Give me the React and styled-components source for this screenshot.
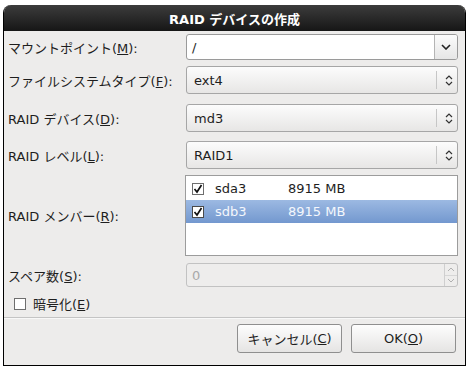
import React from "react";
import styled, { createGlobalStyle } from "styled-components";

const GlobalStyle = createGlobalStyle`
  html, body {
    margin: 0;
    padding: 0;
    background: #ffffff;
  }
  body {
    font-family: "DejaVu Sans", "Noto Sans CJK JP", sans-serif;
    font-size: 13px;
    color: #1e1e1e;
  }
`;

const Window = styled.div`
  margin: 5px 0 0 3px;
  width: 463px;
  height: 361px;
  box-sizing: border-box;
  display: flex;
  flex-direction: column;
  background: #edeceb;
  border: 1px solid #000;
  border-top: none;
  border-radius: 8px 8px 0 0;
  overflow: hidden;
`;

const TitleBar = styled.div`
  height: 26px;
  flex: none;
  display: flex;
  align-items: center;
  justify-content: center;
  background: linear-gradient(#3c3c3c, #161616);
  color: #ffffff;
  font-weight: bold;
  font-size: 13px;
`;

const Form = styled.div`
  display: flex;
  flex-direction: column;
  padding: 0 6px 0 4px;
`;

const Row = styled.div`
  display: flex;
  align-items: center;
  margin-top: ${(p) => p.$top}px;
`;

const Label = styled.div`
  width: 178px;
  flex: none;
  white-space: nowrap;
`;

const Key = styled.span`
  text-decoration: underline;
`;

const Entry = styled.div`
  width: 272px;
  height: 26px;
  box-sizing: border-box;
  display: flex;
  border: 1px solid #9a9a9a;
  border-radius: 3px;
  background: #ffffff;
  overflow: hidden;
`;

const EntryText = styled.div`
  flex: 1;
  display: flex;
  align-items: center;
  padding-left: 5px;
`;

const EntryButton = styled.div`
  width: 22px;
  display: flex;
  align-items: center;
  justify-content: center;
  border-left: 1px solid #b4b4b4;
  background: linear-gradient(#fbfbfb, #e6e6e6);
`;

const Combo = styled.div`
  width: 272px;
  height: 28px;
  box-sizing: border-box;
  display: flex;
  align-items: center;
  border: 1px solid #a6a6a6;
  border-radius: 3px;
  background: linear-gradient(#fcfcfc, #e7e6e5);
`;

const ComboText = styled.div`
  flex: 1;
  padding-left: 7px;
`;

const ComboSep = styled.div`
  width: 1px;
  height: 18px;
  background: #c6c6c6;
  margin-right: 5px;
`;

const ComboArrow = styled.div`
  width: 14px;
  display: flex;
  justify-content: center;
  margin-right: 1px;
`;

const List = styled.div`
  width: 273px;
  height: 81px;
  box-sizing: border-box;
  border: 1px solid #9c9c9c;
  background: #ffffff;
  padding-top: 1px;
  margin-left: -1px;
`;

const ListRow = styled.div`
  height: 23px;
  display: flex;
  align-items: center;
  padding-left: 6px;
  background: ${(p) =>
    p.$selected ? "linear-gradient(#9cb9e2, #7398cf)" : "transparent"};
  color: ${(p) => (p.$selected ? "#f4f7fc" : "#1e1e1e")};
`;

const Box = styled.div`
  width: 12px;
  height: 12px;
  box-sizing: border-box;
  border: 1px solid ${(p) => (p.$selected ? "#4a4a4a" : "#6e6e6e")};
  background: #ffffff;
  display: flex;
  align-items: center;
  justify-content: center;
  flex: none;
`;

const Device = styled.div`
  width: 73px;
  margin-left: 11px;
`;

const Spin = styled.div`
  width: 272px;
  height: 24px;
  box-sizing: border-box;
  display: flex;
  border: 1px solid #c2c2c2;
  border-radius: 3px;
  background: #eeedec;
  color: #a9a9a9;
  overflow: hidden;
`;

const SpinText = styled.div`
  flex: 1;
  display: flex;
  align-items: center;
  padding-left: 5px;
`;

const SpinButtons = styled.div`
  width: 12px;
  display: flex;
  flex-direction: column;
  border-left: 1px solid #cfcfcf;
`;

const SpinHalf = styled.div`
  flex: 1;
  display: flex;
  align-items: center;
  justify-content: center;
  border-top: ${(p) => (p.$bottom ? "1px solid #d6d6d6" : "none")};
`;

const CheckRow = styled.div`
  display: flex;
  align-items: center;
  gap: 7px;
  margin-top: 7px;
  padding-left: 6px;
`;

const Separator = styled.div`
  height: 1px;
  background: #c4c4c4;
  border-bottom: 1px solid #f8f8f8;
  margin-top: 4px;
`;

const Buttons = styled.div`
  display: flex;
  justify-content: flex-end;
  gap: 9px;
  padding: 5px 9px 0 0;
`;

const Button = styled.div`
  width: 105px;
  height: 29px;
  box-sizing: border-box;
  display: flex;
  align-items: center;
  justify-content: center;
  border: 1px solid #8f8f8f;
  border-radius: 3px;
  background: linear-gradient(#fdfdfd, #e5e4e3);
`;

const ChevronDown = () => (
  <svg width="10" height="6" viewBox="0 0 10 6">
    <path d="M1 1l4 4 4-4" fill="none" stroke="#222" strokeWidth="1.6" />
  </svg>
);

const UpDown = ({ color = "#333" }) => (
  <svg width="8" height="11" viewBox="0 0 8 11">
    <path d="M1 4l3-3 3 3M1 7l3 3 3-3" fill="none" stroke={color} strokeWidth="1.2" />
  </svg>
);

const Tick = () => (
  <svg width="10" height="10" viewBox="0 0 10 10">
    <path d="M1.5 5l2.5 3 4.5-7" fill="none" stroke="#111" strokeWidth="1.7" />
  </svg>
);

const SmallArrow = ({ up }) => (
  <svg width="8" height="5" viewBox="0 0 8 5">
    <path d={up ? "M1 4l3-3 3 3" : "M1 1l3 3 3-3"} fill="none" stroke="#b0b0b0" strokeWidth="1" />
  </svg>
);

const members = [
  { name: "sda3", size: "8915 MB", selected: false },
  { name: "sdb3", size: "8915 MB", selected: true },
];

const combos = [
  { top: 6, label: "ファイルシステムタイプ(", key: "F", value: "ext4" },
  { top: 10, label: "RAID デバイス(", key: "D", value: "md3" },
  { top: 9, label: "RAID レベル(", key: "L", value: "RAID1" },
];

export default function App() {
  return (
    <>
      <GlobalStyle />
      <Window>
        <TitleBar>RAID デバイスの作成</TitleBar>
        <Form>
          <Row $top={3}>
            <Label>
              マウントポイント(<Key>M</Key>):
            </Label>
            <Entry>
              <EntryText>/</EntryText>
              <EntryButton>
                <ChevronDown />
              </EntryButton>
            </Entry>
          </Row>
          {combos.map((c) => (
            <Row key={c.key} $top={c.top}>
              <Label>
                {c.label}
                <Key>{c.key}</Key>):
              </Label>
              <Combo>
                <ComboText>{c.value}</ComboText>
                <ComboSep />
                <ComboArrow>
                  <UpDown />
                </ComboArrow>
              </Combo>
            </Row>
          ))}
          <Row $top={6}>
            <Label>
              RAID メンバー(<Key>R</Key>):
            </Label>
            <List>
              {members.map((m) => (
                <ListRow key={m.name} $selected={m.selected}>
                  <Box $selected={m.selected}>
                    <Tick />
                  </Box>
                  <Device>{m.name}</Device>
                  <div>{m.size}</div>
                </ListRow>
              ))}
            </List>
          </Row>
          <Row $top={7}>
            <Label>
              スペア数(<Key>S</Key>):
            </Label>
            <Spin>
              <SpinText>0</SpinText>
              <SpinButtons>
                <SpinHalf>
                  <SmallArrow up />
                </SpinHalf>
                <SpinHalf $bottom>
                  <SmallArrow />
                </SpinHalf>
              </SpinButtons>
            </Spin>
          </Row>
          <CheckRow>
            <Box />
            <span>
              暗号化(<Key>E</Key>)
            </span>
          </CheckRow>
        </Form>
        <Separator />
        <Buttons>
          <Button>
            キャンセル(<Key>C</Key>)
          </Button>
          <Button>
            OK(<Key>O</Key>)
          </Button>
        </Buttons>
      </Window>
    </>
  );
}
